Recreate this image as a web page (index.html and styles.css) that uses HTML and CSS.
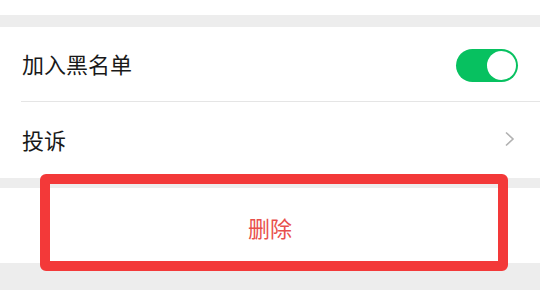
FILE: index.html
```html
<!DOCTYPE html>
<html lang="zh-CN">
<head>
  <meta charset="UTF-8">
  <meta name="viewport" content="width=device-width, initial-scale=1.0">
  <title>资料设置</title>
  <link rel="stylesheet" href="styles.css">
</head>
<body>
  <div class="page">
    <div class="top-block"></div>

    <div class="group">
      <div class="cell">
        <span class="cell-title">加入黑名单</span>
        <div class="switch on"><span class="knob"></span></div>
      </div>
      <div class="cell">
        <span class="cell-title">投诉</span>
        <svg class="arrow" width="12" height="16" viewBox="0 0 12 16">
          <path d="M2 1.5 L9 8 L2 14.5" fill="none" stroke="#b2b2b2" stroke-width="1.6"/>
        </svg>
      </div>
    </div>

    <div class="group delete-group">
      <div class="delete-btn">删除</div>
    </div>

    <!-- annotation box round the delete button -->
    <div class="highlight"></div>
  </div>
</body>
</html>
```

FILE: styles.css
```css
* {
  box-sizing: border-box;
}

body {
  margin: 0;
  background-color: #ededed;
  font-family: "Noto Sans CJK SC", "Noto Sans", sans-serif;
  color: #191919;
}

.page {
  position: relative;
  height: 290px;
  overflow: hidden;
}

.top-block {
  height: 15px;
  background-color: #fff;
  margin-bottom: 12px;
}

.group {
  background-color: #fff;
  padding-left: 21px;
}

.cell {
  display: flex;
  align-items: center;
  justify-content: space-between;
  height: 75px;
  padding-right: 22px;
  border-bottom: 1px solid #e5e5e5;
}

.cell:last-child {
  height: 76px;
  border-bottom: none;
}

.cell-title {
  font-size: 22px;
  line-height: 1;
  padding-left: 1px;
  margin-top: -2px;
}

.switch {
  width: 62px;
  height: 33px;
  border-radius: 17px;
  background-color: #07c160;
  padding: 2px;
  display: flex;
  justify-content: flex-end;
  margin-top: 2px;
}

.knob {
  width: 29px;
  height: 29px;
  border-radius: 50%;
  background-color: #fff;
}

.arrow {
  margin-right: 2px;
  margin-top: -2px;
}

.delete-group {
  margin-top: 10px;
  padding-left: 0;
}

.delete-btn {
  height: 75px;
  display: flex;
  align-items: center;
  justify-content: center;
  padding-top: 2px;
  font-size: 22px;
  color: #e8504c;
}

.highlight {
  position: absolute;
  left: 40px;
  top: 174px;
  width: 468px;
  height: 97px;
  border: 10px solid #f33939;
  border-radius: 6px;
}
```
